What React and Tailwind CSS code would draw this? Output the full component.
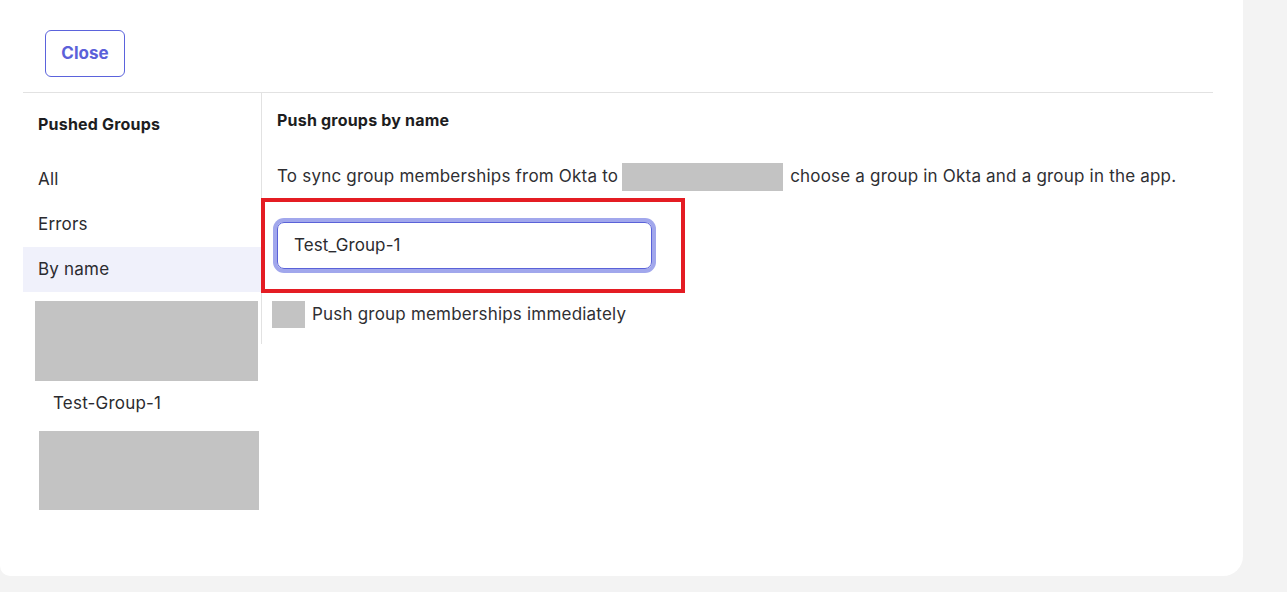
import React from 'react';

const font = { fontFamily: 'Inter, "Noto Sans", sans-serif' };

export default function App() {
  return (
    <div className="w-[1287px] h-[592px] bg-[#f3f3f3] overflow-hidden" style={font}>
      <div className="w-[1243px] h-[576px] bg-white rounded-br-[20px] rounded-bl-[10px] pl-[23px] pr-[30px]">
        {/* Close */}
        <div className="pt-[30px] pl-[22px] pb-[15px] border-b border-[#e2e2e2]">
          <button className="w-[80px] h-[47px] rounded-[6px] border border-[#5b63dc] text-[#5b61d9] text-[17px] font-bold">
            Close
          </button>
        </div>

        <div className="flex">
          {/* Sidebar */}
          <div className="w-[239px] h-[251px] border-r border-[#e2e2e2] shrink-0">
            <div className="pl-[15px] pt-[19px] text-[16px] leading-[24px] font-bold tracking-[0.2px] text-[#1d1d21]">Pushed Groups</div>
            <div className="mt-[21px] text-[17px] tracking-[0.2px] text-[#2b2b2f]">
              <div className="h-[45px] flex items-center pl-[15px]">All</div>
              <div className="h-[45px] flex items-center pl-[15px]">Errors</div>
              <div className="h-[45px] flex items-center pl-[15px] bg-[#f0f1fb]">By name</div>
            </div>
            <div className="mt-[9px] ml-[12px] w-[223px] h-[80px] bg-[#c3c3c3]" />
            <div className="h-[46px] flex items-center pl-[30px] text-[17px] tracking-[0.2px] text-[#2b2b2f]">Test-Group-1</div>
            <div className="mt-[4px] ml-[16px] w-[220px] h-[79px] bg-[#c3c3c3]" />
          </div>

          {/* Content */}
          <div className="flex-1">
            <div className="pl-[15px] pt-[17px] text-[16px] leading-[20px] font-bold tracking-[0.2px] text-[#1d1d21]">Push groups by name</div>
            <div className="pl-[15px] mt-[33px] flex items-center h-[28px] text-[17px] tracking-[0.2px] text-[#2f2f33]">
              <span>To sync group memberships from Okta to</span>
              <span className="inline-block w-[161px] h-[28px] bg-[#c3c3c3] mx-[4px]" />
              <span className="ml-[3px]">choose a group in Okta and a group in the app.</span>
            </div>
            <div className="-ml-[1px] mt-[7px] w-[424px] h-[95px] border-4 border-[#e41c23] pt-[20px] pl-[12px]">
              <div className="w-[375px] h-[47px] rounded-[7px] border border-[#5a62d8] ring-4 ring-[#a1a7ec] flex items-center pl-[16px] text-[17px] tracking-[0.1px] text-[#2b2b2f]">
                Test_Group-1
              </div>
            </div>
            <div className="mt-[8px] ml-[10px] flex items-center">
              <span className="w-[33px] h-[27px] bg-[#c3c3c3]" />
              <span className="ml-[7px] text-[17px] tracking-[0.2px] text-[#2f2f33]">Push group memberships immediately</span>
            </div>
          </div>
        </div>
      </div>
    </div>
  );
}
